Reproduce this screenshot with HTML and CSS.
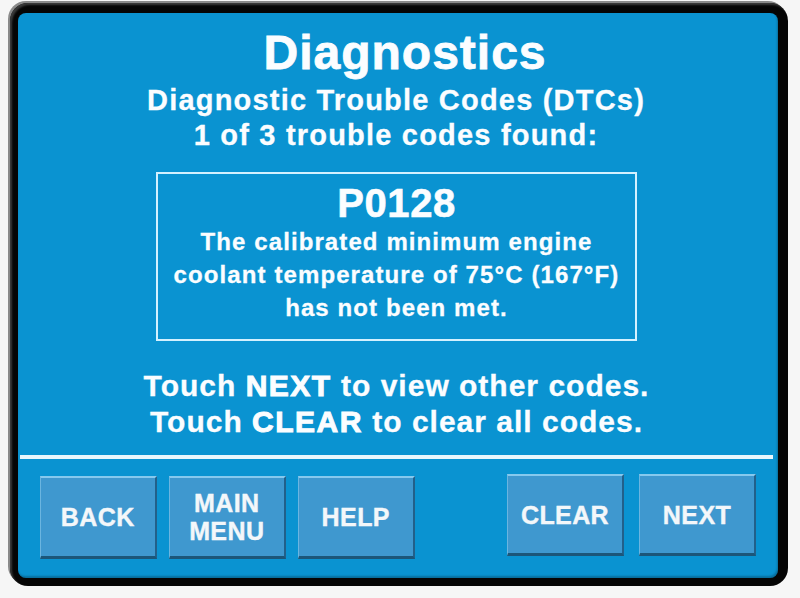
FILE: index.html
```html
<!DOCTYPE html>
<html lang="en">
<head>
<meta charset="utf-8">
<title>Diagnostics</title>
<link rel="stylesheet" href="styles.css">
</head>
<body>
<div class="bezel">
  <div class="screen">
    <h1 class="title">Diagnostics</h1>
    <div class="subtitle">
      <div>Diagnostic Trouble Codes (DTCs)</div>
      <div>1 of 3 trouble codes found:</div>
    </div>
    <div class="code-box">
      <div class="code">P0128</div>
      <div class="desc">
        <div>The calibrated minimum engine</div>
        <div>coolant temperature of 75°C (167°F)</div>
        <div>has not been met.</div>
      </div>
    </div>
    <div class="hint">
      <div>Touch <strong>NEXT</strong> to view other codes.</div>
      <div>Touch <strong>CLEAR</strong> to clear all codes.</div>
    </div>
    <div class="divider"></div>
    <div class="buttons">
      <div class="group group-left">
        <div class="btn">BACK</div>
        <div class="btn">MAIN<br>MENU</div>
        <div class="btn">HELP</div>
      </div>
      <div class="group group-right">
        <div class="btn">CLEAR</div>
        <div class="btn">NEXT</div>
      </div>
    </div>
  </div>
</div>
</body>
</html>
```

FILE: styles.css
```css
html, body {
  margin: 0;
  padding: 0;
}
body {
  background: #f6f6f6;
  width: 800px;
  height: 598px;
  overflow: hidden;
  font-family: "Liberation Sans", Arial, sans-serif;
  color: #fbfdff;
}
.bezel {
  margin: 3px 0 0 10px;
  width: 778px;
  height: 583px;
  box-sizing: border-box;
  padding: 10px 10px 8px 8px;
  background: #050505;
  border-radius: 18px;
  box-shadow: -2px -2px 0 #8a8a8a, inset 2px 2px 2px #3a3a3a;
}
.screen {
  width: 760px;
  height: 565px;
  background: #0a93d1;
  border-radius: 8px;
  display: flex;
  flex-direction: column;
  align-items: center;
  box-sizing: border-box;
  padding-top: 16px;
  box-shadow: inset -1px -2px 2px rgba(0,0,0,0.25);
  -webkit-text-stroke: 0.3px #fbfdff;
}
.title {
  margin: 0;
  font-size: 48px;
  line-height: 48px;
  font-weight: bold;
  letter-spacing: 1px;
  margin-left: 14px;
  -webkit-text-stroke: 0.8px #fbfdff;
}
.subtitle {
  margin-top: 6px;
  font-size: 29px;
  line-height: 35px;
  font-weight: bold;
  letter-spacing: 1.2px;
  text-align: center;
  margin-right: 4px;
}
.code-box {
  margin-top: 19px;
  width: 481px;
  height: 169px;
  box-sizing: border-box;
  border: 2px solid #d3f1ff;
  padding-top: 8px;
  text-align: center;
  margin-right: 3px;
}
.code {
  font-size: 40px;
  line-height: 43px;
  font-weight: bold;
  letter-spacing: 0.6px;
  -webkit-text-stroke: 0.6px #fbfdff;
}
.desc {
  font-size: 24px;
  line-height: 33px;
  font-weight: bold;
  letter-spacing: 1.1px;
}
.hint {
  margin-top: 27px;
  font-size: 30px;
  line-height: 36px;
  font-weight: bold;
  letter-spacing: 1px;
  text-align: center;
  margin-right: 3px;
}
.hint strong {
  -webkit-text-stroke: 1px #fbfdff;
  letter-spacing: 1.5px;
}
.divider {
  margin-top: 15px;
  align-self: stretch;
  height: 4px;
  background: #e9f7fd;
  margin-left: 2px;
  margin-right: 5px;
}
.buttons {
  margin-top: 15px;
  align-self: stretch;
  display: flex;
  justify-content: space-between;
  align-items: flex-start;
  padding: 0 22px;
  height: 85px;
}
.group {
  display: flex;
}
.group-left {
  gap: 12.5px;
  margin-top: 2px;
}
.group-right {
  gap: 15px;
}
.btn {
  width: 116.5px;
  height: 83px;
  box-sizing: border-box;
  background: #3f98cf;
  border-top: 2px solid #86c9ee;
  border-left: 1px solid #6bb5e0;
  border-bottom: 3px solid #1c5679;
  border-right: 2px solid #22608a;
  display: flex;
  align-items: center;
  justify-content: center;
  text-align: center;
  font-size: 25px;
  line-height: 28px;
  font-weight: bold;
  letter-spacing: 0.4px;
  color: #f3f7fa;
  -webkit-text-stroke: 0.4px #f3f7fa;
}
.group-right .btn {
  width: 117px;
  height: 82px;
}
```
